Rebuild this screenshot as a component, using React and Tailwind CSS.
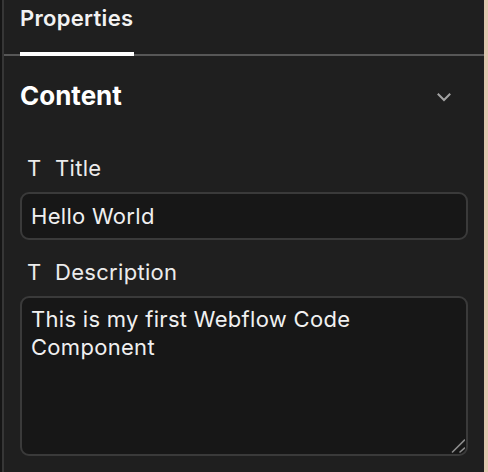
import React from "react";

const ChevronDown = () => (
  <svg width="14" height="9" viewBox="0 0 14 9" fill="none" className="text-[#a3a3a3]">
    <path d="M1.5 1.5 7 7l5.5-5.5" stroke="currentColor" strokeWidth="2" strokeLinecap="square" />
  </svg>
);

const ResizeHandle = () => (
  <svg width="14" height="14" viewBox="0 0 14 14" fill="none" className="absolute right-[3px] bottom-[3px] pointer-events-none">
    <path d="M1.5 13 13.5 1M9 13l4.5-4" stroke="#8c8c8c" strokeWidth="1.6" strokeLinecap="round" />
  </svg>
);

const FieldLabel = ({ children }) => (
  <div className="flex items-center h-[28px] pl-[7px] text-[22px] leading-[28px] tracking-[0.3px] text-[#ececec]">
    <span className="w-[13px] font-normal">T</span>
    <span className="ml-[15px]">{children}</span>
  </div>
);

export default function App() {
  return (
    <div
      className="w-[488px] h-[472px] flex bg-[#161616] overflow-hidden"
      style={{ fontFamily: "Inter, 'Noto Sans', sans-serif" }}
    >
      <div className="w-[2px] bg-[#151515]" />
      <div className="w-[2px] bg-[#363636]" />
      <div className="w-[480px] bg-[#1f1f1f] flex flex-col">
        {/* tabs */}
        <div className="h-[56px] px-4 flex border-b-2 border-[#575757]">
          <div className="h-[56px] w-[114px] border-b-4 border-white -mb-[2px] pt-[4px]">
            <span className="text-[22px] leading-[28px] font-semibold text-[#f2f2f2] tracking-[0.3px]">
              Properties
            </span>
          </div>
        </div>

        {/* section header */}
        <div className="px-4 pt-[24px] flex items-center justify-between">
          <h2 className="text-[26px] leading-[32px] font-bold text-white">Content</h2>
          <div className="mr-[17px] mt-[3px]">
            <ChevronDown />
          </div>
        </div>

        <div className="px-4 pt-[42px] flex flex-col">
          <FieldLabel>Title</FieldLabel>
          <input
            readOnly
            value="Hello World"
            className="mt-[10px] h-[48px] w-full rounded-[9px] border-2 border-[#3a3a3a] bg-[#171717] pl-[9px] text-[22px] tracking-[0.3px] text-[#f0f0f0] outline-none"
          />

          <div className="mt-[18px]">
            <FieldLabel>Description</FieldLabel>
          </div>
          <div className="relative mt-[10px]">
            <textarea
              readOnly
              value="This is my first Webflow Code Component"
              className="block h-[160px] w-full resize-none rounded-[9px] border-2 border-[#3a3a3a] bg-[#171717] pl-[9px] pr-[9px] pt-[7px] text-[22px] leading-[28px] tracking-[0.3px] text-[#f0f0f0] outline-none"
            />
            <ResizeHandle />
          </div>
        </div>
      </div>
      <div className="w-[4px] bg-[#e2c8af]" />
    </div>
  );
}
